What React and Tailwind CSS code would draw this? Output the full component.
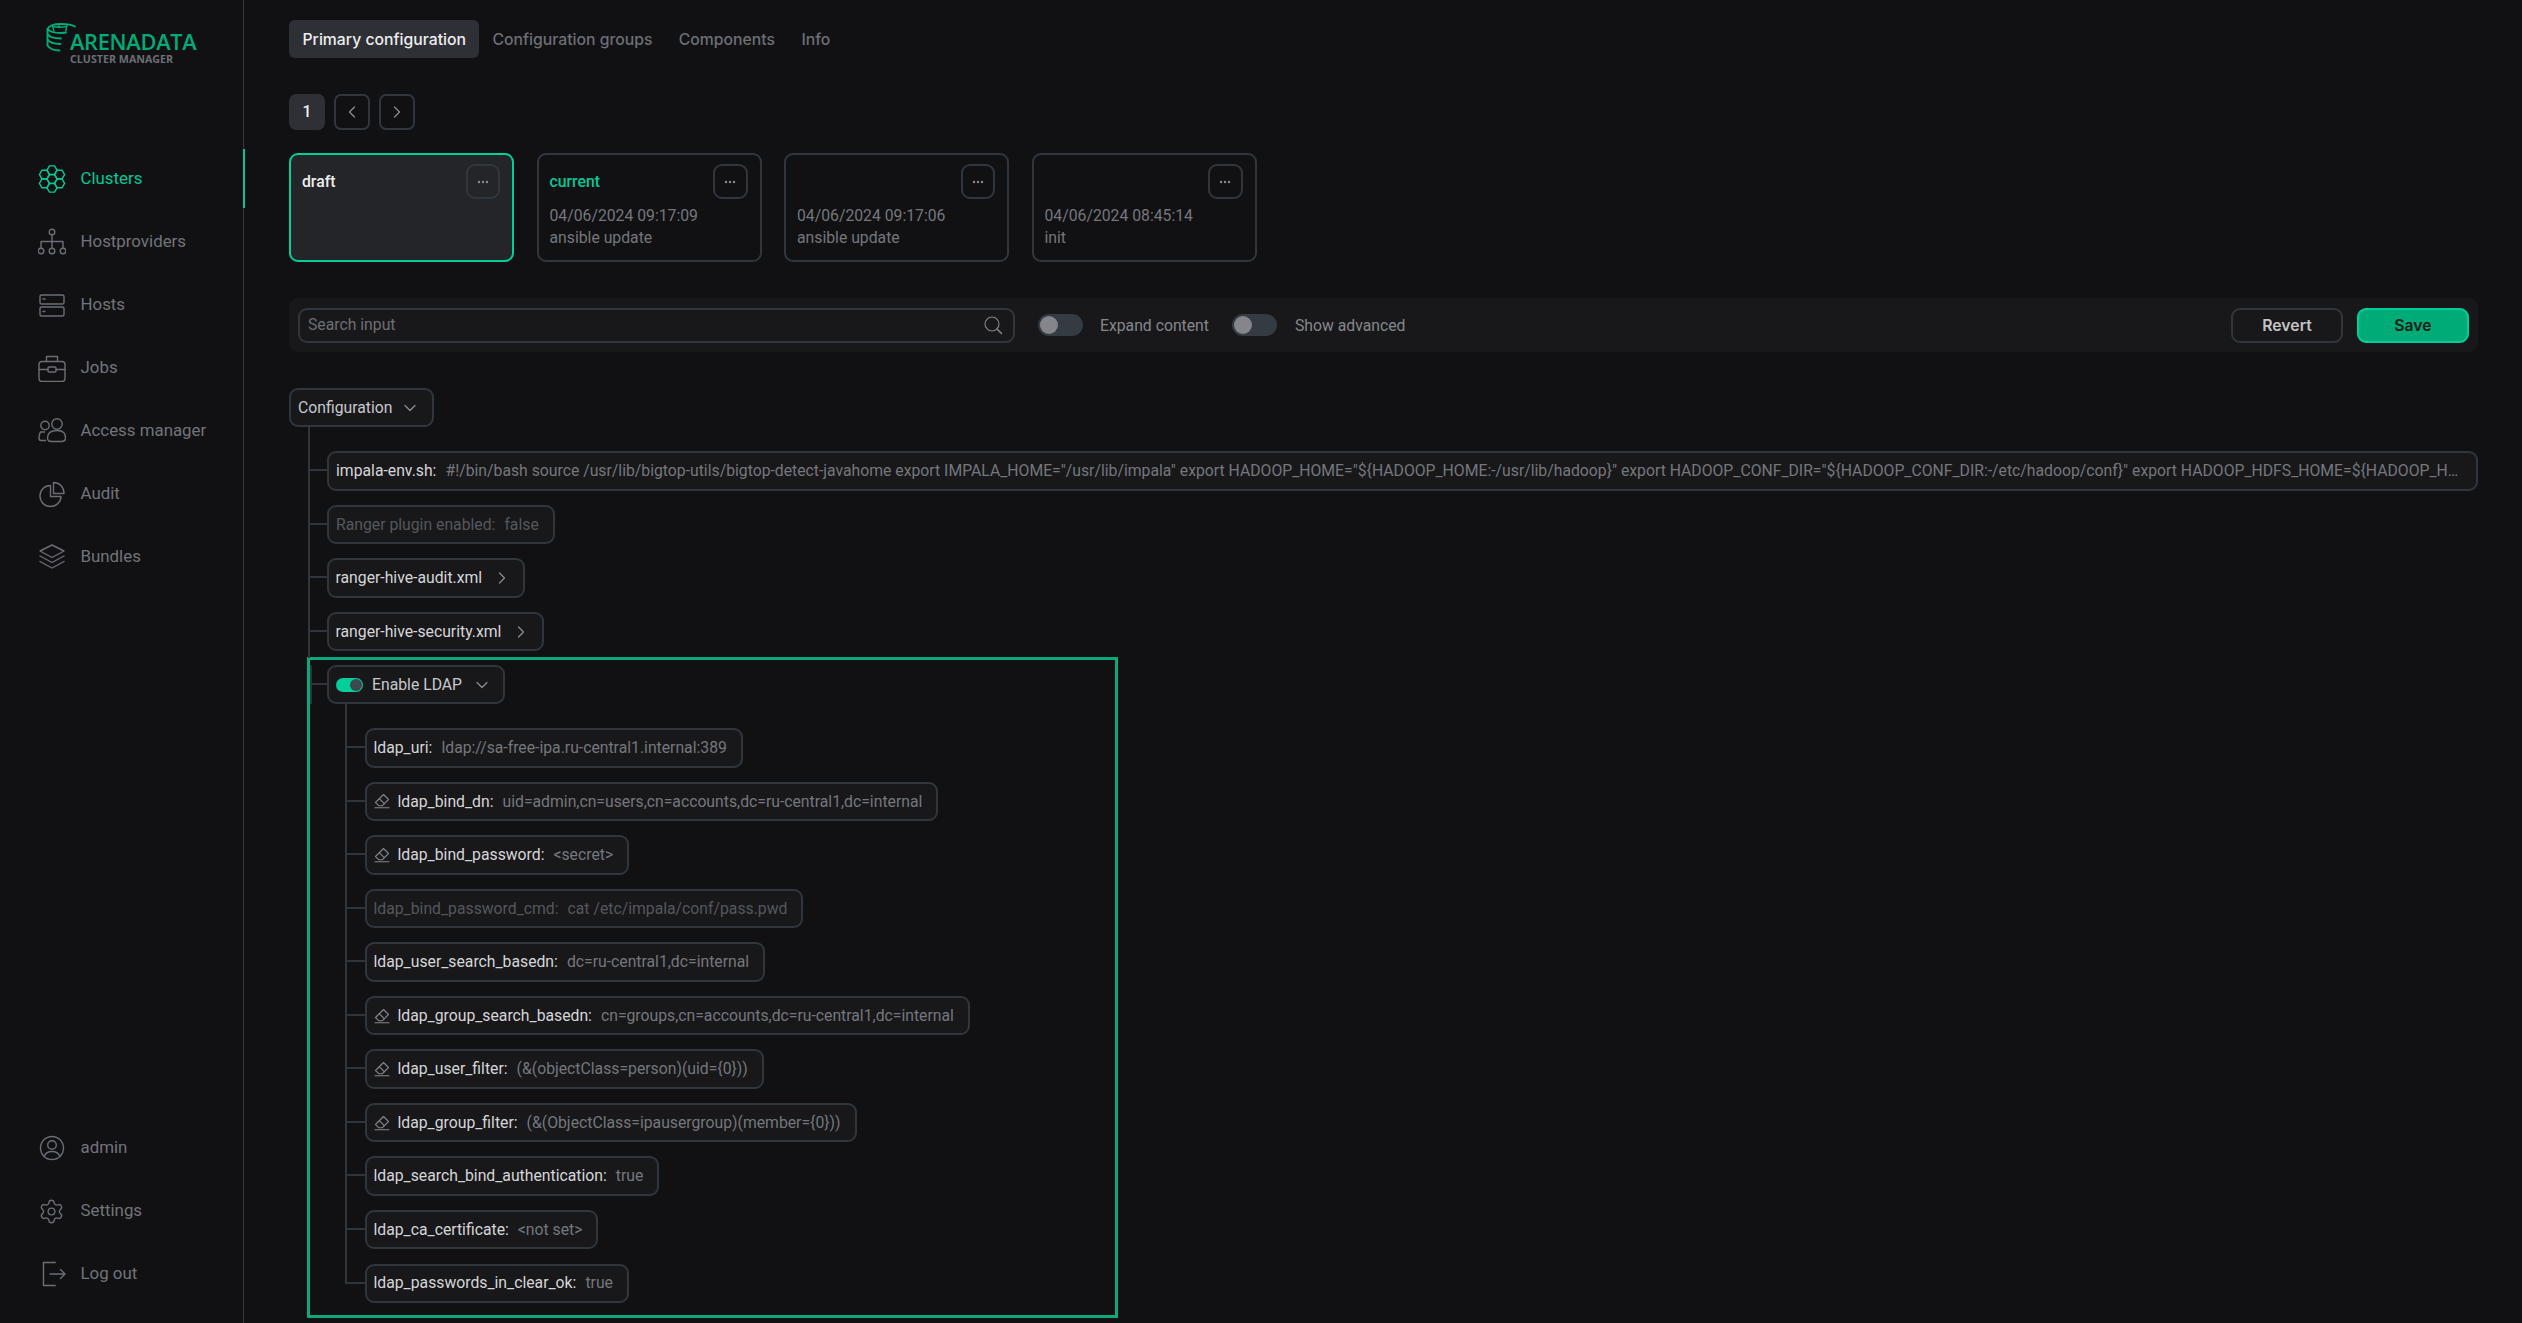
import React from "react";
import { ChevronDown, ChevronLeft, ChevronRight, Settings } from "lucide-react";

const Ic = ({ children, w = 28, h = 28 }) => (
  <svg width={w} height={h} viewBox="0 0 28 28" fill="none" stroke="currentColor" strokeWidth="1.4" strokeLinecap="round" strokeLinejoin="round" className="shrink-0">
    {children}
  </svg>
);

const hex = (cx, cy, r) =>
  [0, 60, 120, 180, 240, 300]
    .map((a) => `${(cx + r * Math.cos((a * Math.PI) / 180)).toFixed(2)},${(cy + r * Math.sin((a * Math.PI) / 180)).toFixed(2)}`)
    .join(" ");

const ClustersIcon = () => (
  <Ic>
    {[[14, 14], [14, 5.2], [14, 22.8], [6.4, 9.6], [21.6, 9.6], [6.4, 18.4], [21.6, 18.4]].map(([x, y]) => (
      <polygon key={`${x}-${y}`} points={hex(x, y, 5)} />
    ))}
  </Ic>
);
const HostIcon = () => (
  <Ic>
    <circle cx="14" cy="4" r="2.8" />
    <path d="M14 7v13M14 13.5H3v6.5M14 13.5h11v6.5" />
    <circle cx="3" cy="23" r="2.8" />
    <circle cx="14" cy="23" r="2.8" />
    <circle cx="25" cy="23" r="2.8" />
  </Ic>
);
const HostsIcon = () => (
  <Ic>
    <rect x="2" y="4" width="24" height="9" rx="1.5" />
    <rect x="2" y="16" width="24" height="9" rx="1.5" />
    <path d="M5 8h2M5 20.5h2" />
  </Ic>
);
const JobsIcon = () => (
  <Ic>
    <rect x="1" y="7.5" width="26" height="20" rx="3" />
    <path d="M8.5 7.5V2.5h11v5M1 15.5h9M18 15.5h9" />
    <rect x="10" y="13" width="8" height="5" rx="1" />
  </Ic>
);
const AccessIcon = () => (
  <Ic>
    <circle cx="19" cy="7" r="5.2" />
    <path d="M9.5 21c0-5 3-7.5 9.5-7.5s8.5 2.5 8.5 7.5c0 2.5-2 3.5-4 3.5h-10c-2 0-4-1-4-3.5z" />
    <circle cx="7" cy="8.5" r="4.2" />
    <path d="M6.5 15H2.5c-1 1.5-1.5 3.5-1.5 6 0 1.5.5 2.5 2 2.5h4.5" />
  </Ic>
);
const AuditIcon = () => (
  <Ic>
    <path d="M12.5 5.5C6.5 5.5 2 10.2 2 16c0 6 4.7 10.5 10.5 10.5S23 21.7 23 16.5H12.5z" />
    <path d="M15.5 2.5c5.8 0 10.5 4.5 10.5 11h-10.500z" />
  </Ic>
);
const BundlesIcon = () => (
  <Ic>
    <path d="M14 2L26 8l-12 6.500L2 8z" />
    <path d="M2 13l12 6.500L26 13" />
    <path d="M2 18.500l12 6.500 12-6.500" />
  </Ic>
);
const AdminIcon = () => (
  <Ic>
    <circle cx="14" cy="14" r="11.500" />
    <circle cx="14" cy="11" r="4.300" />
    <path d="M6 22.500c1.500-3.500 4-5 8-5s6.500 1.500 8 5" />
  </Ic>
);
const LogoutIcon = () => (
  <Ic>
    <path d="M17 2.500H5.500v23H17" strokeLinecap="square" strokeLinejoin="miter" />
    <path d="M12 14h15M22.500 9.500L27 14l-4.500 4.500" />
  </Ic>
);

const Logo = () => (
  <div className="flex items-start pl-[46px] pt-[23px]">
    <svg width="30" height="30" viewBox="0 0 30 30" fill="none" stroke="#00ab78" strokeWidth="1.900" strokeLinecap="round" className="shrink-0 -mr-[6px]">
      <path d="M1.500 6C3 2.500 9 1 15 1c5.500 0 11 .7 14 2.500" />
      <path d="M1.500 6v4M1.500 6c2 2.500 7 4 13 4 2 0 4-.2 5.500-.5" />
      <path d="M6.500 3l1.500 5M13 1.500v3M21 2l-1.200 6M7 3.500c4 1 9 1 14 0" strokeWidth="1.400" />
      <path d="M1.500 11c2 3 7 4.500 13.500 4.500" />
      <path d="M1.500 11v5.500c2 3 7 4.500 13 4.500" />
      <path d="M1.500 17v5.500c2 3 7 5 12 5" />
    </svg>
    <div className="mt-[7px] flex flex-col">
      <span className="font-['Open_Sans',sans-serif] text-[21.800px] leading-[24px] font-semibold tracking-[-0.300px] text-[#00ab78]">ARENADATA</span>
      <span className="-mt-[1px] font-['Open_Sans',sans-serif] text-[10.700px] leading-[13px] font-bold text-[#6b6e75]">CLUSTER MANAGER</span>
    </div>
  </div>
);

const NavItem = ({ icon, label, active }) => (
  <div className={`relative flex h-[63px] items-center gap-[15px] pl-[37.500px] ${active ? "text-[#00c997]" : "text-[#72747a]"}`}>
    <span className={`flex w-[28px] justify-center ${active ? "text-[#00c997]" : "text-[#6b6e75]"}`}>{icon}</span>
    <span className="text-[16.875px]">{label}</span>
    {active && <span className="absolute -right-[2px] top-[2px] h-[59px] w-[2px] bg-[#00c997]" />}
  </div>
);

const Sidebar = () => (
  <aside className="flex h-full w-[244px] shrink-0 flex-col border-r border-[#37383d] pb-[17.500px]">
    <Logo />
    <nav className="mt-[81px] flex flex-col">
      <NavItem active icon={<ClustersIcon />} label="Clusters" />
      <NavItem icon={<HostIcon />} label="Hostproviders" />
      <NavItem icon={<HostsIcon />} label="Hosts" />
      <NavItem icon={<JobsIcon />} label="Jobs" />
      <NavItem icon={<AccessIcon />} label="Access manager" />
      <NavItem icon={<AuditIcon />} label="Audit" />
      <NavItem icon={<BundlesIcon />} label="Bundles" />
    </nav>
    <div className="mt-auto flex flex-col">
      <NavItem icon={<AdminIcon />} label="admin" />
      <NavItem icon={<Settings size={27} strokeWidth={1.200} />} label="Settings" />
      <NavItem icon={<LogoutIcon />} label="Log out" />
    </div>
  </aside>
);

const Dots = () => (
  <svg width="12" height="4" viewBox="0 0 12 4" fill="#8a8c92">
    <circle cx="2" cy="2" r="1.200" />
    <circle cx="6" cy="2" r="1.200" />
    <circle cx="10" cy="2" r="1.200" />
  </svg>
);

const Card = ({ title, date, note, selected, green }) => (
  <div className={`relative h-[109px] w-[225px] shrink-0 rounded-[9px] border-2 pl-[11px] pr-[12px] pt-[9px] ${selected ? "border-[#00cf9a] bg-[#242529]" : "border-[#30363e]"}`}>
    <div className="flex h-[35px] items-center justify-between">
      <span className={`pt-px text-[15.750px] font-medium ${green ? "text-[#00c997]" : "text-[#eeeeef]"}`}>{title}</span>
      <span className="flex h-[35px] w-[34.500px] items-center justify-center rounded-[9px] border-2 border-[#30363e]">
        <Dots />
      </span>
    </div>
    {date && (
      <div className="mt-[5.500px] text-[15.750px] leading-[22.500px] text-[#75777c]">
        <div>{date}</div>
        <div>{note}</div>
      </div>
    )}
  </div>
);

const Toggle = () => (
  <span className="flex h-[22px] w-[45px] shrink-0 items-center rounded-full bg-[#343b43] pl-[2px]">
    <span className="h-[18px] w-[18px] rounded-full bg-[#85868c]" />
  </span>
);

const Toolbar = () => (
  <div className="mt-[36px] flex h-[54px] items-center rounded-[9px] bg-[#18181b] px-[9px]">
    <div className="flex h-[35px] w-[717px] items-center rounded-[9px] border-2 border-[#30363e] pl-[8px] pr-[10px]">
      <input readOnly placeholder="Search input" className="min-w-0 flex-1 bg-transparent text-[15.750px] outline-none placeholder:text-[#6d6f74]" />
      <svg width="20" height="20" viewBox="0 0 20 20" fill="none" stroke="#85878c" strokeWidth="1.100" strokeLinecap="round">
        <circle cx="9" cy="9" r="7" />
        <path d="M14 14l4.500 4.500" strokeWidth="1.500" />
      </svg>
    </div>
    <div className="ml-[23px]"><Toggle /></div>
    <span className="ml-[17px] pt-px text-[15.750px] text-[#85878b]">Expand content</span>
    <div className="ml-[23px]"><Toggle /></div>
    <span className="ml-[18px] pt-px text-[15.750px] text-[#85878b]">Show advanced</span>
    <button className="ml-auto h-[35px] w-[112px] rounded-[9px] border-2 border-[#30363e] pt-px font-['Inter',sans-serif] text-[15.750px] font-semibold text-[#c4c4c6]">Revert</button>
    <button className="ml-[14px] h-[35px] w-[112px] rounded-[9px] border-2 border-[#00cf9a] bg-[#00ab78] pt-px font-['Inter',sans-serif] text-[15.750px] font-semibold text-[#0e2019]">Save</button>
  </div>
);

const Connector = ({ last, w = "w-[19.500px]" }) => (
  <div className={`flex shrink-0 flex-col self-stretch ${w}`}>
    <div className="h-[20px] border-b-2 border-l-2 border-[#2f353d]" />
    {!last && <div className="flex-1 border-l-2 border-[#2f353d]" />}
  </div>
);

const Pill = ({ children, grow }) => (
  <div className={`flex h-[39.375px] items-center rounded-[9px] border-2 border-[#30363e] bg-[#18181b] pl-[7px] pr-[14px] text-[15.750px] ${grow ? "w-full min-w-0" : "w-fit"}`}>
    {children}
  </div>
);

const Eraser = () => (
  <svg width="16" height="16" viewBox="0 0 16 16" fill="none" stroke="#85878c" strokeWidth="1.100" strokeLinejoin="round" strokeLinecap="round" className="mr-[8px] shrink-0">
    <path d="M9.500 1.500l5 5L8.200 12.800H5L1.500 9.500z" />
    <path d="M5.300 5.700l5 5" />
    <path d="M1 14.800h14" />
  </svg>
);

const Row = ({ label, value, edit, disabled, last, pb = "pb-[14.170px]" }) => (
  <div className="flex">
    <Connector last={last} />
    <div className={pb}>
      <Pill>
        {edit && <Eraser />}
        <span className={disabled ? "text-[#55575d]" : "text-[#d6d6d8]"}>{label}:</span>
        <span className={`ml-[9px] ${disabled ? "text-[#55575d]" : "text-[#75777c]"}`}>{value}</span>
      </Pill>
    </div>
  </div>
);

const Group = ({ label, pb = "pb-[14.170px]" }) => (
  <div className="flex">
    <Connector w="w-[19px]" />
    <div className={pb}>
      <Pill>
        <span className="text-[#d6d6d8]">{label}</span>
        <ChevronRight size={20} strokeWidth={1.500} className="-mr-[3px] ml-[10px] text-[#8a8c90]" />
      </Pill>
    </div>
  </div>
);

const ldap = [
  { label: "ldap_uri", value: "ldap://sa-free-ipa.ru-central1.internal:389" },
  { label: "ldap_bind_dn", value: "uid=admin,cn=users,cn=accounts,dc=ru-central1,dc=internal", edit: true },
  { label: "ldap_bind_password", value: "<secret>", edit: true },
  { label: "ldap_bind_password_cmd", value: "cat /etc/impala/conf/pass.pwd", disabled: true },
  { label: "ldap_user_search_basedn", value: "dc=ru-central1,dc=internal" },
  { label: "ldap_group_search_basedn", value: "cn=groups,cn=accounts,dc=ru-central1,dc=internal", edit: true },
  { label: "ldap_user_filter", value: "(&(objectClass=person)(uid={0}))", edit: true },
  { label: "ldap_group_filter", value: "(&(ObjectClass=ipausergroup)(member={0}))", edit: true },
  { label: "ldap_search_bind_authentication", value: "true" },
  { label: "ldap_ca_certificate", value: "<not set>" },
  { label: "ldap_passwords_in_clear_ok", value: "true", last: true, pb: "pb-[12px]" },
];

const Tree = () => (
  <div className="mt-[36px]">
    <div className="flex h-[39.375px] w-[145px] items-center justify-between rounded-[9px] border-2 border-[#30363e] bg-[#18181b] pl-[7px] pr-[12px] text-[15.750px] text-[#c8c8cc]">
      Configuration
      <ChevronDown size={20} strokeWidth={1.500} className="text-[#8a8c90]" />
    </div>
    <div className="ml-[18.500px]">
      <div className="h-[24px] w-0 border-l-2 border-[#2f353d]" />
      <div className="flex">
        <Connector />
        <div className="min-w-0 flex-1 pb-[14.170px]">
          <Pill grow>
            <span className="shrink-0 text-[#d6d6d8]">impala-env.sh:</span>
            <span className="ml-[9px] min-w-0 truncate text-[#75777c]">
              {'#!/bin/bash source /usr/lib/bigtop-utils/bigtop-detect-javahome export IMPALA_HOME="/usr/lib/impala" export HADOOP_HOME="${HADOOP_HOME:-/usr/lib/hadoop}" export HADOOP_CONF_DIR="${HADOOP_CONF_DIR:-/etc/hadoop/conf}" export HADOOP_HDFS_HOME=${HADOOP_HDFS_HOME:-/usr/lib/hadoop-hdfs} export HADOOP_YARN_HOME'}
            </span>
          </Pill>
        </div>
      </div>
      <div className="flex">
        <Connector />
        <div className="pb-[14.170px]">
          <Pill>
            <span className="text-[#55575d]">Ranger plugin enabled:</span>
            <span className="ml-[9px] text-[#55575d]">false</span>
          </Pill>
        </div>
      </div>
      <Group label="ranger-hive-audit.xml" />
      <Group label="ranger-hive-security.xml" pb="pb-[6.500px]" />
    </div>
    <div className="-mt-px ml-[18px] w-[811px] border-[3px] border-[#0ca97d] pt-[5px]">
      <div className="flex">
        <Connector w="w-[17px]" />
        <Pill>
          <span className="flex h-[14px] w-[27px] items-center justify-end rounded-full bg-[#00cf9a] pr-px">
            <span className="h-[12px] w-[12px] rounded-full bg-[#3f474f]" />
          </span>
          <span className="ml-[9px] text-[#c8c8cc]">Enable LDAP</span>
          <ChevronDown size={20} strokeWidth={1.500} className="-mr-[3px] ml-[10px] text-[#8a8c90]" />
        </Pill>
      </div>
      <div className="ml-[35px]">
        <div className="h-[24px] w-0 border-l-2 border-[#2f353d]" />
        {ldap.map((r) => (
          <Row key={r.label} {...r} />
        ))}
      </div>
    </div>
  </div>
);

export default function App() {
  return (
    <div className="flex h-screen w-full overflow-hidden bg-[#111114] font-['Roboto',sans-serif]">
      <Sidebar />
      <main className="min-w-0 flex-1 pl-[45px] pr-[44px] pt-[20px]">
        <div className="flex font-['Inter',sans-serif] text-[15.750px] font-medium text-[#6d6f75]">
          <span className="flex h-[38px] items-center rounded-[6px] bg-[#2e3036] px-[13.500px] pt-px text-[#eeeeef]">Primary configuration</span>
          <span className="flex h-[38px] items-center pl-[13px] pr-[13.250px] pt-px">Configuration groups</span>
          <span className="flex h-[38px] items-center pl-[13px] pr-[13.250px] pt-px">Components</span>
          <span className="flex h-[38px] items-center pl-[13.250px] pr-[13.250px] pt-px">Info</span>
        </div>
        <div className="mt-[36px] flex gap-[9px]">
          <span className="flex h-[36px] w-[36px] items-center justify-center rounded-[7px] bg-[#2e3036] text-[15.750px] font-medium text-[#eeeeef]">1</span>
          <span className="flex h-[36px] w-[36px] items-center justify-center rounded-[7px] border-2 border-[#30363e] text-[#8a8c90]"><ChevronLeft size={20} strokeWidth={1.500} /></span>
          <span className="flex h-[36px] w-[36px] items-center justify-center rounded-[7px] border-2 border-[#30363e] text-[#8a8c90]"><ChevronRight size={20} strokeWidth={1.500} /></span>
        </div>
        <div className="mt-[23px] flex gap-[22.500px]">
          <Card selected title="draft" />
          <Card green title="current" date="04/06/2024 09:17:09" note="ansible update" />
          <Card title="" date="04/06/2024 09:17:06" note="ansible update" />
          <Card title="" date="04/06/2024 08:45:14" note="init" />
        </div>
        <Toolbar />
        <Tree />
      </main>
    </div>
  );
}
